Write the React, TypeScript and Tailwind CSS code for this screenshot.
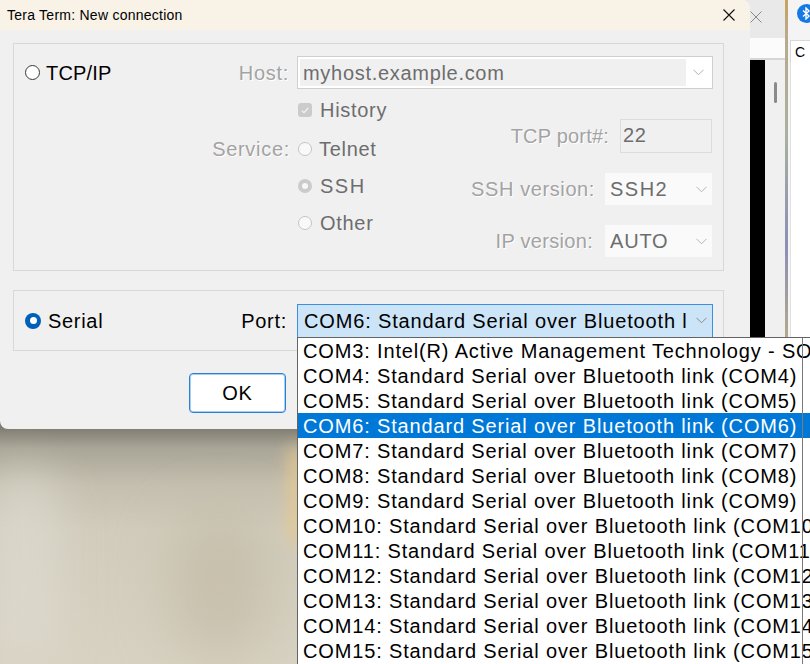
import React from "react";

function Chevron({ color = "#9a9a9a" }: { color?: string }) {
  return (
    <svg width="11" height="7" viewBox="0 0 11 7" className="block">
      <path d="M0.5 0.8 L5.5 5.8 L10.5 0.8" stroke={color} strokeWidth="1" fill="none" />
    </svg>
  );
}

const dis = "text-[#a3a3a3] [text-shadow:1px_1px_0_#ffffff]";
const val = "text-[#6d6d6d]";

const items = [
  "COM3: Intel(R) Active Management Technology - SOL (COM3)",
  "COM4: Standard Serial over Bluetooth link (COM4)",
  "COM5: Standard Serial over Bluetooth link (COM5)",
  "COM6: Standard Serial over Bluetooth link (COM6)",
  "COM7: Standard Serial over Bluetooth link (COM7)",
  "COM8: Standard Serial over Bluetooth link (COM8)",
  "COM9: Standard Serial over Bluetooth link (COM9)",
  "COM10: Standard Serial over Bluetooth link (COM10)",
  "COM11: Standard Serial over Bluetooth link (COM11)",
  "COM12: Standard Serial over Bluetooth link (COM12)",
  "COM13: Standard Serial over Bluetooth link (COM13)",
  "COM14: Standard Serial over Bluetooth link (COM14)",
  "COM15: Standard Serial over Bluetooth link (COM15)",
];

function DisabledRadio({ checked = false }: { checked?: boolean }) {
  return checked ? (
    <div className="w-[14px] h-[14px] rounded-full bg-[#cbcbcb] flex items-center justify-center">
      <div className="w-[6px] h-[6px] rounded-full bg-[#f7f7f7]" />
    </div>
  ) : (
    <div className="w-[14px] h-[14px] rounded-full border border-[#c4c4c4] bg-[#f9f9f9]" />
  );
}

export default function App() {
  return (
    <div className="relative w-[810px] h-[664px] overflow-hidden font-['Liberation_Sans',Arial,sans-serif] bg-[linear-gradient(180deg,#7f7c71_0%,#7f7c71_64.4%,#a9a597_67.5%,#c4bfaf_73%,#d1ccbc_80%,#d8d2c2_100%)]">
      {/* wallpaper smudges */}
      <div className="absolute left-[-10px] top-[470px] w-[70px] h-[190px] rounded-full bg-[#dedbd0] blur-[22px] opacity-70" />
      <div className="absolute left-[170px] top-[510px] w-[100px] h-[150px] rounded-full bg-[#bcb29c] blur-[28px] opacity-50" />
      <div className="absolute left-[288px] top-[445px] w-[18px] h-[100px] rounded-full bg-[#e6c990] blur-[8px] opacity-80" />

      {/* background window behind, right */}
      <div className="absolute left-[740px] top-0 w-[45px] h-[340px] flex flex-col bg-[#efefef]">
        <div className="h-[38px] bg-[#e9e9e9] flex items-start">
          <svg width="12" height="12" viewBox="0 0 12 12" className="ml-[10px] mt-[11px]">
            <path d="M0.5 0.5 L11.5 11.5 M11.5 0.5 L0.5 11.5" stroke="#8a8a8a" strokeWidth="1" />
          </svg>
        </div>
        <div className="h-[22px] bg-[#fbfbfb] border-b-2 border-[#d6d6d6]" />
        <div className="flex-1 flex">
          <div className="w-[25px] bg-black" />
          <div className="flex-1 bg-[#f0f0f0] relative">
            <div className="absolute left-[9px] top-[22px] w-[3px] h-[21px] rounded-full bg-[#8a8a8a]" />
          </div>
        </div>
      </div>
      <div className="absolute left-[785px] top-0 w-[3px] h-[340px] bg-[linear-gradient(180deg,#c9a25a_0%,#b8aa8c_10%,#a9b0a0_40%,#8b8fb5_72%,#b4a98c_100%)]" />
      <div className="absolute left-[788px] top-0 w-[30px] h-[340px] flex flex-col bg-[#f4f4f4]">
        <div className="h-[40px] relative">
          <div className="absolute left-[9px] top-[4px] w-[19px] h-[19px] rounded-full bg-[#1479e6] flex items-center justify-center">
            <svg width="9" height="13" viewBox="0 0 9 13">
              <path d="M1 3.5 L7 9 L4 12 L4 1 L7 4 L1 9.5" stroke="white" strokeWidth="1.4" fill="none" />
            </svg>
          </div>
        </div>
        <div className="ml-[2px] h-[22px] bg-white border border-[#d8d8d8] border-b-0 text-[14px] text-black pl-[4px] leading-[22px]">C</div>
        <div className="flex-1 ml-[2px] bg-white border-l border-[#e0e0e0]" />
      </div>

      {/* dialog */}
      <div className="absolute left-0 top-0 w-[750px] h-[429px] bg-[#f0f0f0] rounded-tr-[8px] rounded-bl-[8px] overflow-hidden flex flex-col">
        <div className="h-[30px] shrink-0 bg-[#f8f2e7] flex items-center justify-between pl-[7px] pr-[15px]">
          <span className="text-[14px] text-black tracking-[0.25px]">Tera Term: New connection</span>
          <svg width="12" height="12" viewBox="0 0 12 12">
            <path d="M0.5 0.5 L11.5 11.5 M11.5 0.5 L0.5 11.5" stroke="#111" strokeWidth="1.1" />
          </svg>
        </div>

        <div className="text-[20px] tracking-[0.7px] leading-none">
          {/* TCP/IP group */}
          <div className="mt-[13px] ml-[13px] w-[711px] h-[228px] border border-[#d8d8d8] flex flex-col">
            <div className="mt-[12px] h-[33px] flex items-center">
              <div className="w-[283px] flex items-center">
                <div className="ml-[11px] w-[15px] h-[15px] rounded-full border border-[#3a3a3a] bg-white" />
                <span className="ml-[6px] text-black tracking-[0.2px]">TCP/IP</span>
                <div className="flex-1" />
                <span className={`mr-[8px] ${dis}`}>Host:</span>
              </div>
              <div className="w-[416px] h-[33px] border border-[#cfcfcf] bg-white flex items-stretch p-[2px]">
                <div className={`flex-1 bg-[#f0f0f0] flex items-center pl-[3px] ${val}`}>myhost.example.com</div>
                <div className="w-[24px] flex items-center justify-center">
                  <Chevron color="#b0b0b0" />
                </div>
              </div>
            </div>

            <div className="flex items-start">
              <div className="w-[440px] flex flex-col">
                <div className="mt-[9px] h-[24px] flex items-center">
                  <div className="w-[284px]" />
                  <div className="w-[14px] h-[14px] rounded-[3px] bg-[#cbcbcb] flex items-center justify-center">
                    <svg width="8" height="7" viewBox="0 0 8 7">
                      <path d="M0.8 3.6 L3 5.6 L7.2 1" stroke="#f5f5f5" strokeWidth="1.2" fill="none" />
                    </svg>
                  </div>
                  <span className={`ml-[8px] ${val}`}>History</span>
                </div>
                <div className="mt-[8px] h-[37px] flex items-center">
                  <span className={`w-[276px] text-right ${dis}`}>Service:</span>
                  <div className="ml-[8px]">
                    <DisabledRadio />
                  </div>
                  <span className={`ml-[7px] ${val}`}>Telnet</span>
                </div>
                <div className="h-[37px] flex items-center">
                  <div className="w-[284px]" />
                  <DisabledRadio checked />
                  <span className={`ml-[8px] ${val} tracking-[1.5px]`}>SSH</span>
                </div>
                <div className="h-[37px] flex items-center">
                  <div className="w-[284px]" />
                  <DisabledRadio />
                  <span className={`ml-[8px] ${val}`}>Other</span>
                </div>
              </div>

              <div className="flex-1 flex flex-col items-end pr-[11px]">
                <div className="mt-[30px] h-[34px] flex items-center">
                  <span className={`mr-[11px] tracking-[0.2px] ${dis}`}>TCP port#:</span>
                  <div className={`w-[92px] h-[34px] border border-[#dcdcdc] bg-[#f0f0f0] pl-[2px] pt-[5px] ${val}`}>22</div>
                </div>
                <div className="mt-[20px] h-[32px] flex items-center">
                  <span className={`mr-[10px] tracking-[0.6px] ${dis}`}>SSH version:</span>
                  <div className="w-[107px] h-[32px] bg-[#fafafa] flex items-center justify-between pl-[5px] pr-[5px]">
                    <span className={`${val} tracking-[1.5px]`}>SSH2</span>
                    <Chevron color="#b4b4b4" />
                  </div>
                </div>
                <div className="mt-[20px] h-[32px] flex items-center">
                  <span className={`mr-[12px] tracking-[0.3px] ${dis}`}>IP version:</span>
                  <div className="w-[107px] h-[32px] bg-[#fafafa] flex items-center justify-between pl-[5px] pr-[5px]">
                    <span className={`${val} tracking-[0.8px]`}>AUTO</span>
                    <Chevron color="#b4b4b4" />
                  </div>
                </div>
              </div>
            </div>
          </div>

          {/* Serial group */}
          <div className="mt-[19px] ml-[13px] w-[711px] h-[61px] border border-[#d8d8d8] flex items-center">
            <div className="w-[283px] flex items-center">
              <div className="ml-[11px] w-[16px] h-[16px] rounded-full bg-[#005fb8] flex items-center justify-center">
                <div className="w-[7px] h-[7px] rounded-full bg-white" />
              </div>
              <span className="ml-[7px] text-black">Serial</span>
              <div className="flex-1" />
              <span className="mr-[10px] text-black">Port:</span>
            </div>
            <div className="w-[416px] h-[34px] border border-[#3d8ee0] bg-[#cce4f7] flex items-center justify-between pl-[6px] pr-[5px] overflow-hidden">
              <span className="text-black whitespace-nowrap overflow-hidden tracking-[0.85px]">COM6: Standard Serial over Bluetooth l</span>
              <Chevron color="#8a8a8a" />
            </div>
          </div>

          <button className="mt-[22px] ml-[189px] w-[97px] h-[40px] rounded-[4px] bg-white border border-[#2a80d4] shadow-[inset_0_0_0_1px_#a9cdf0] text-black text-[20px] tracking-[0.7px]">
            OK
          </button>
        </div>
      </div>

      {/* dropdown list */}
      <div className="absolute left-[297px] top-[337px] w-[530px] h-[330px] bg-white border border-[#646464] text-[20px] tracking-[0.85px] text-black">
        {items.map((t, i) => (
          <div
            key={t}
            className={`h-[25px] flex items-center pl-[5px] whitespace-nowrap ${i === 3 ? "bg-[#0078d7] text-white" : ""}`}
          >
            {t}
          </div>
        ))}
      </div>
      <div className="absolute left-[802px] top-[338px] w-px h-[326px] bg-[#7a7a7a]" />
    </div>
  );
}
